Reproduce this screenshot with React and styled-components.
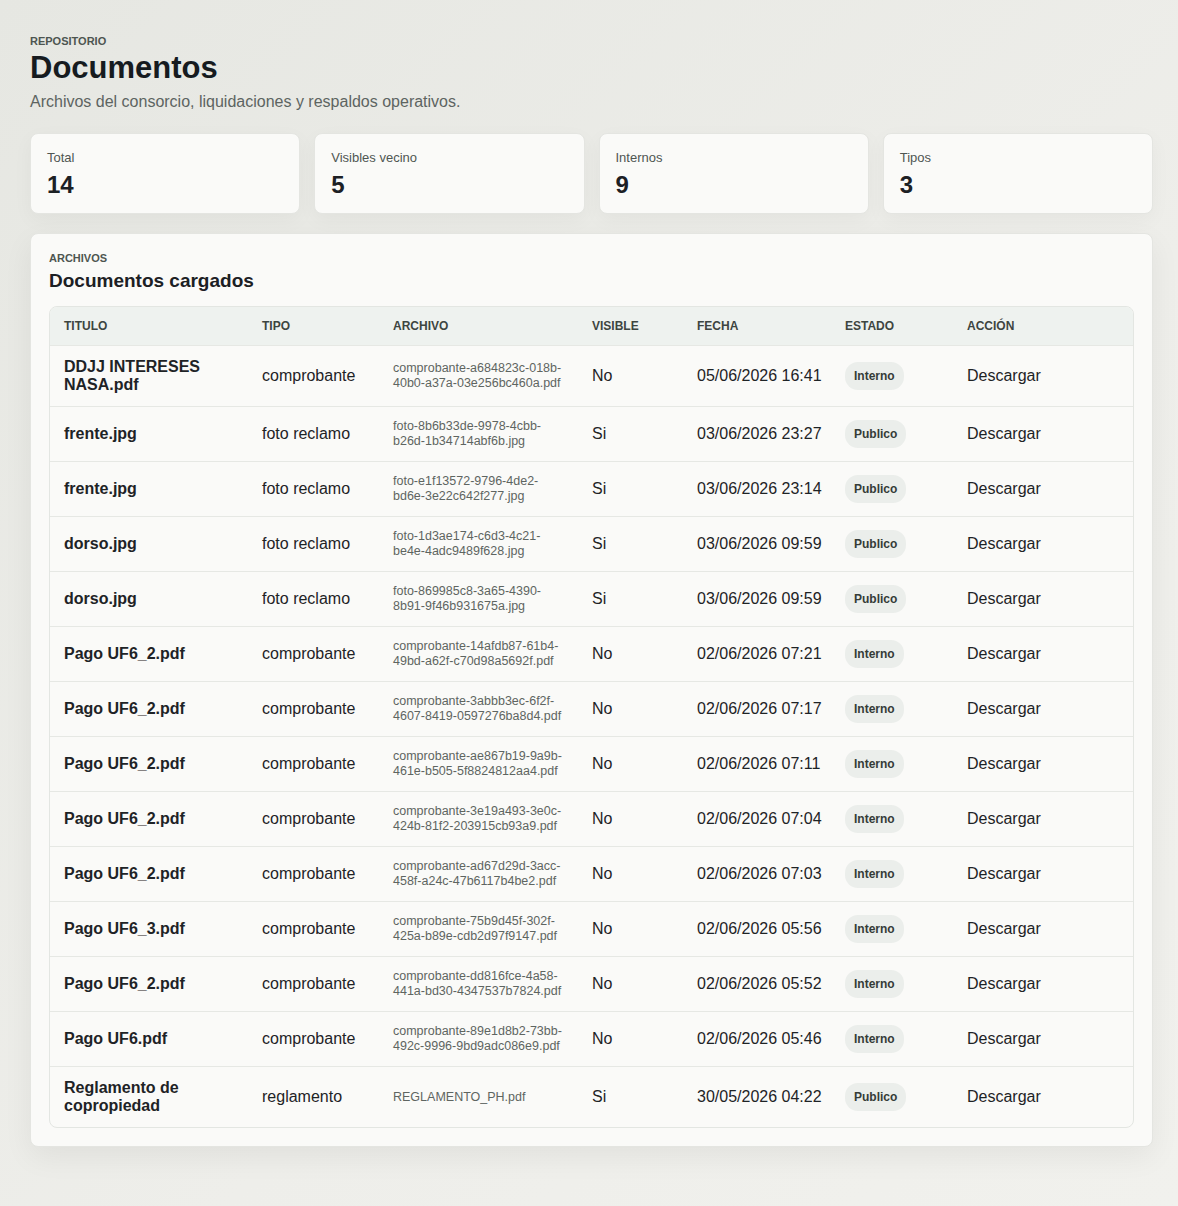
import React from 'react';
import styled, { createGlobalStyle } from 'styled-components';

const GlobalStyle = createGlobalStyle`
  body {
    margin: 0;
    font-family: "Liberation Sans", Arial, sans-serif;
    background: linear-gradient(135deg, #e6e7e2 0%, #eeeeea 60%, #f1f1ed 100%);
    color: #1c2024;
  }
`;

const docs = [
  ['DDJJ INTERESES NASA.pdf', 'comprobante', 'comprobante-a684823c-018b-40b0-a37a-03e256bc460a.pdf', 'No', '05/06/2026 16:41', 'Interno'],
  ['frente.jpg', 'foto reclamo', 'foto-8b6b33de-9978-4cbb-b26d-1b34714abf6b.jpg', 'Si', '03/06/2026 23:27', 'Publico'],
  ['frente.jpg', 'foto reclamo', 'foto-e1f13572-9796-4de2-bd6e-3e22c642f277.jpg', 'Si', '03/06/2026 23:14', 'Publico'],
  ['dorso.jpg', 'foto reclamo', 'foto-1d3ae174-c6d3-4c21-be4e-4adc9489f628.jpg', 'Si', '03/06/2026 09:59', 'Publico'],
  ['dorso.jpg', 'foto reclamo', 'foto-869985c8-3a65-4390-8b91-9f46b931675a.jpg', 'Si', '03/06/2026 09:59', 'Publico'],
  ['Pago UF6_2.pdf', 'comprobante', 'comprobante-14afdb87-61b4-49bd-a62f-c70d98a5692f.pdf', 'No', '02/06/2026 07:21', 'Interno'],
  ['Pago UF6_2.pdf', 'comprobante', 'comprobante-3abbb3ec-6f2f-4607-8419-0597276ba8d4.pdf', 'No', '02/06/2026 07:17', 'Interno'],
  ['Pago UF6_2.pdf', 'comprobante', 'comprobante-ae867b19-9a9b-461e-b505-5f8824812aa4.pdf', 'No', '02/06/2026 07:11', 'Interno'],
  ['Pago UF6_2.pdf', 'comprobante', 'comprobante-3e19a493-3e0c-424b-81f2-203915cb93a9.pdf', 'No', '02/06/2026 07:04', 'Interno'],
  ['Pago UF6_2.pdf', 'comprobante', 'comprobante-ad67d29d-3acc-458f-a24c-47b6117b4be2.pdf', 'No', '02/06/2026 07:03', 'Interno'],
  ['Pago UF6_3.pdf', 'comprobante', 'comprobante-75b9d45f-302f-425a-b89e-cdb2d97f9147.pdf', 'No', '02/06/2026 05:56', 'Interno'],
  ['Pago UF6_2.pdf', 'comprobante', 'comprobante-dd816fce-4a58-441a-bd30-4347537b7824.pdf', 'No', '02/06/2026 05:52', 'Interno'],
  ['Pago UF6.pdf', 'comprobante', 'comprobante-89e1d8b2-73bb-492c-9996-9bd9adc086e9.pdf', 'No', '02/06/2026 05:46', 'Interno'],
  ['Reglamento de copropiedad', 'reglamento', 'REGLAMENTO_PH.pdf', 'Si', '30/05/2026 04:22', 'Publico'],
];

const stats = [['Total', 14], ['Visibles vecino', 5], ['Internos', 9], ['Tipos', 3]];

const Page = styled.div`
  padding: 35px 25px 60px 30px;
`;

const Eyebrow = styled.div`
  font-size: 11px;
  font-weight: 700;
  color: #4d5550;
  text-transform: uppercase;
`;

const Title = styled.h1`
  font-size: 31px;
  font-weight: 700;
  margin: 3px 0 7px;
  color: #161b1f;
`;

const Subtitle = styled.p`
  margin: 0;
  font-size: 16px;
  color: #5d6461;
`;

const Stats = styled.div`
  display: grid;
  grid-template-columns: repeat(4, 1fr);
  gap: 14px;
  margin-top: 22px;
`;

const StatCard = styled.div`
  background: #fafaf8;
  border: 1px solid #e4e5e1;
  border-radius: 8px;
  height: 81px;
  box-sizing: border-box;
  padding: 16px 16px;
  box-shadow: 0 6px 20px rgba(0, 0, 0, 0.04);
`;

const StatLabel = styled.div`
  font-size: 13px;
  color: #4f5652;
`;

const StatValue = styled.div`
  font-size: 24px;
  font-weight: 700;
  margin-top: 6px;
`;

const Panel = styled.div`
  margin-top: 19px;
  background: #fafaf8;
  border: 1px solid #e4e5e1;
  border-radius: 8px;
  padding: 18px 18px 18px;
  box-shadow: 0 10px 30px rgba(0, 0, 0, 0.06);
`;

const PanelTitle = styled.h2`
  margin: 6px 0 14px;
  font-size: 19px;
  font-weight: 700;
`;

const TableWrap = styled.div`
  border: 1px solid #e3e6e2;
  border-radius: 8px;
  overflow: hidden;
`;

const Table = styled.table`
  width: 100%;
  border-collapse: collapse;
  table-layout: fixed;
`;

const Th = styled.th`
  text-align: left;
  font-size: 12px;
  font-weight: 700;
  color: #3d4541;
  background: #eef2ef;
  height: 38px;
  padding: 0 0 0 ${p => p.first ? 14 : 0}px;
  width: ${p => p.w}px;
`;

const Td = styled.td`
  border-top: 1px solid #e6e8e4;
  height: ${p => p.tall ? 60 : 54}px;
  padding: 0 ${p => p.file ? 22 : 10}px 0 ${p => p.first ? 14 : 0}px;
  font-size: 16px;
  color: #1e2326;
  vertical-align: middle;
`;

const DocTitle = styled.span`
  font-weight: 700;
  display: block;
  line-height: 18px;
`;

const FileName = styled.span`
  display: block;
  font-size: 12.5px;
  line-height: 15px;
  color: #5e6561;
`;

const Badge = styled.span`
  display: inline-block;
  background: #ebeeeb;
  border-radius: 13px;
  padding: 7px 9px;
  font-size: 12px;
  font-weight: 700;
  color: #353c38;
`;

const cols = [
  ['TITULO', 198],
  ['TIPO', 131],
  ['ARCHIVO', 199],
  ['VISIBLE', 105],
  ['FECHA', 148],
  ['ESTADO', 122],
  ['ACCIÓN', undefined],
];

export default function App() {
  return (
    <Page>
      <GlobalStyle />
      <Eyebrow>Repositorio</Eyebrow>
      <Title>Documentos</Title>
      <Subtitle>Archivos del consorcio, liquidaciones y respaldos operativos.</Subtitle>
      <Stats>
        {stats.map(([label, value]) => (
          <StatCard key={label}>
            <StatLabel>{label}</StatLabel>
            <StatValue>{value}</StatValue>
          </StatCard>
        ))}
      </Stats>
      <Panel>
        <Eyebrow>Archivos</Eyebrow>
        <PanelTitle>Documentos cargados</PanelTitle>
        <TableWrap>
          <Table>
            <thead>
              <tr>
                {cols.map(([c, w], i) => <Th key={c} w={w} first={i === 0}>{c}</Th>)}
              </tr>
            </thead>
            <tbody>
              {docs.map((d, i) => {
                const tall = i === 0 || i === docs.length - 1;
                return (
                  <tr key={i}>
                    <Td first tall={tall}><DocTitle>{d[0]}</DocTitle></Td>
                    <Td tall={tall}>{d[1]}</Td>
                    <Td tall={tall} file><FileName>{d[2]}</FileName></Td>
                    <Td tall={tall}>{d[3]}</Td>
                    <Td tall={tall}>{d[4]}</Td>
                    <Td tall={tall}><Badge>{d[5]}</Badge></Td>
                    <Td tall={tall}>Descargar</Td>
                  </tr>
                );
              })}
            </tbody>
          </Table>
        </TableWrap>
      </Panel>
    </Page>
  );
}
